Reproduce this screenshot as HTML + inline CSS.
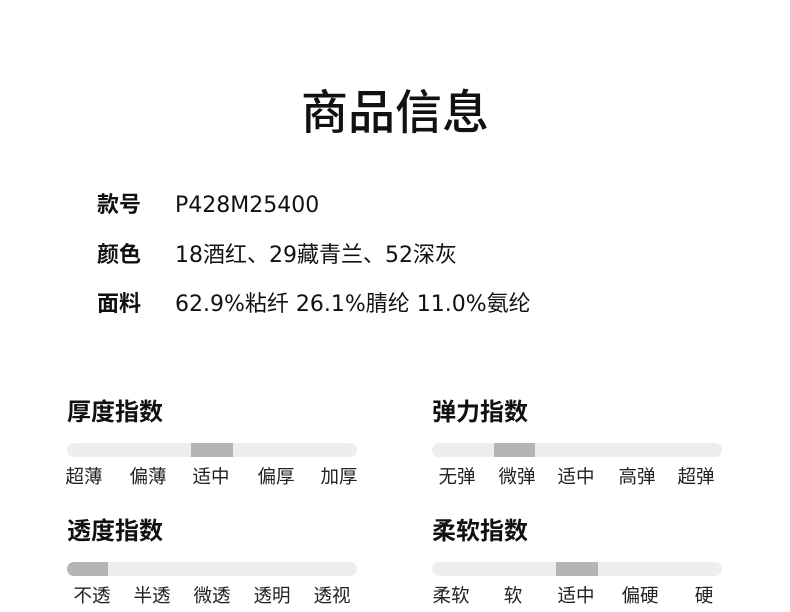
<!DOCTYPE html>
<html><head><meta charset="utf-8"><style>
body{margin:0;width:790px;height:612px;background:#fff;font-family:"Noto Sans CJK SC",sans-serif;color:#111;position:relative;overflow:hidden}
.a{position:absolute;white-space:nowrap;line-height:30px}
h1{position:absolute;left:0;width:790px;top:76px;margin:0;text-align:center;font-size:47px;font-weight:500;line-height:66px}
.k{font-size:22px;font-weight:bold;left:97px}
.v{font-size:22px;left:175px;font-family:"DejaVu Sans","Noto Sans CJK SC",sans-serif;margin-top:2px}
.h{font-size:24px;font-weight:bold}
.bar{position:absolute;width:290px;height:14px;border-radius:7px;background:#eee;overflow:hidden}
.bar i{position:absolute;top:0;height:14px;background:#b5b5b5}
.l{position:absolute;font-size:18.5px;color:#222;transform:translateX(-50%);white-space:nowrap;line-height:22px}
</style></head><body>
<h1>商品信息</h1>
<div class="a k" style="top:188px">款号</div><div class="a v" style="top:189px">P428M25400</div>
<div class="a k" style="top:238px">颜色</div><div class="a v" style="top:239px">18酒红、29藏青兰、52深灰</div>
<div class="a k" style="top:287px">面料</div><div class="a v" style="top:288px">62.9%粘纤 26.1%腈纶 11.0%氨纶</div>

<div class="a h" style="left:67px;top:395px">厚度指数</div>
<div class="bar" style="left:67px;top:443px"><i style="left:124px;width:42px"></i></div>
<div class="l" style="left:84px;top:465px">超薄</div><div class="l" style="left:148px;top:465px">偏薄</div><div class="l" style="left:211px;top:465px">适中</div><div class="l" style="left:276px;top:465px">偏厚</div><div class="l" style="left:339px;top:465px">加厚</div>

<div class="a h" style="left:432px;top:395px">弹力指数</div>
<div class="bar" style="left:432px;top:443px"><i style="left:62px;width:41px"></i></div>
<div class="l" style="left:457px;top:465px">无弹</div><div class="l" style="left:517px;top:465px">微弹</div><div class="l" style="left:576px;top:465px">适中</div><div class="l" style="left:637px;top:465px">高弹</div><div class="l" style="left:696px;top:465px">超弹</div>

<div class="a h" style="left:67px;top:514px">透度指数</div>
<div class="bar" style="left:67px;top:562px"><i style="left:0;width:41px"></i></div>
<div class="l" style="left:92px;top:584px">不透</div><div class="l" style="left:152px;top:584px">半透</div><div class="l" style="left:212px;top:584px">微透</div><div class="l" style="left:272px;top:584px">透明</div><div class="l" style="left:332px;top:584px">透视</div>

<div class="a h" style="left:432px;top:514px">柔软指数</div>
<div class="bar" style="left:432px;top:562px"><i style="left:124px;width:42px"></i></div>
<div class="l" style="left:451px;top:584px">柔软</div><div class="l" style="left:513px;top:584px">软</div><div class="l" style="left:576px;top:584px">适中</div><div class="l" style="left:640px;top:584px">偏硬</div><div class="l" style="left:704px;top:584px">硬</div>
</body></html>
